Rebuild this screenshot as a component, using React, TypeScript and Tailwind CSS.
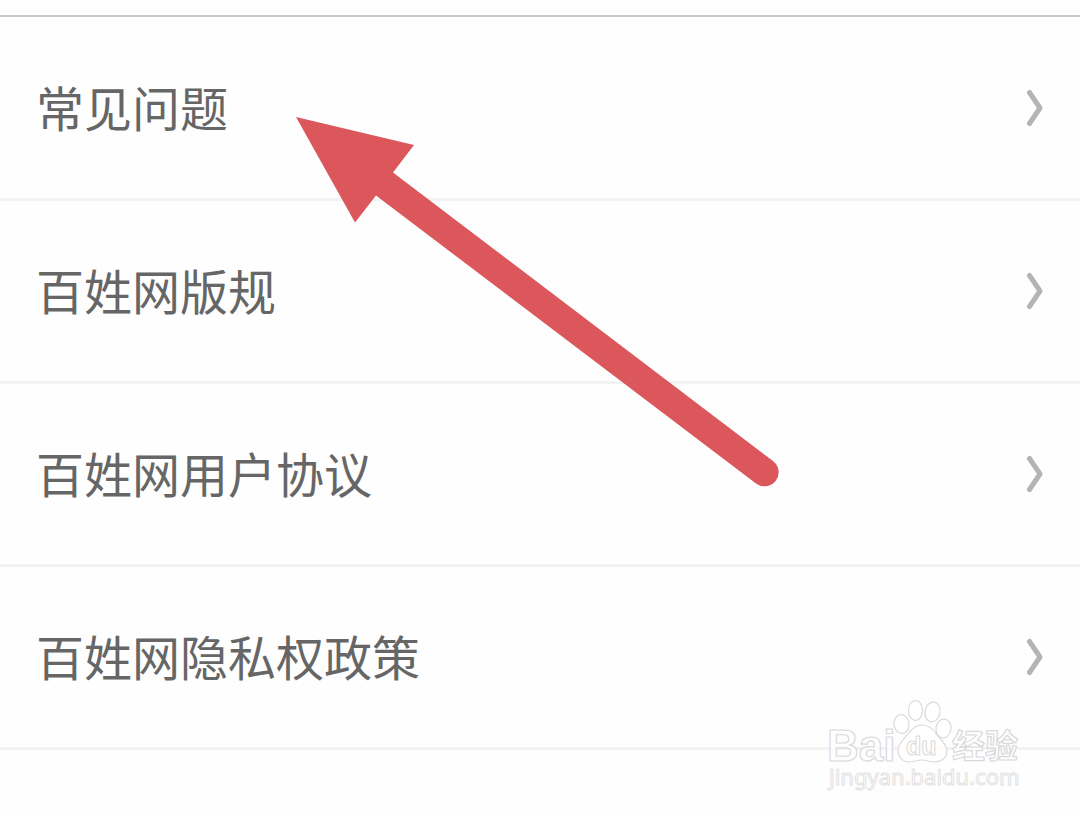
interface HelpLink {
  label: string
  href: string
}

const links: HelpLink[] = [
  { label: '常见问题', href: '#faq' },
  { label: '百姓网版规', href: '#rules' },
  { label: '百姓网用户协议', href: '#agreement' },
  { label: '百姓网隐私权政策', href: '#privacy' },
]

function Chevron() {
  return (
    <svg className="h-10 w-5 shrink-0" viewBox="0 0 20 40" fill="none" aria-hidden="true">
      <path
        d="M4.500 4.500 L15 20 L4.500 35.500"
        stroke="#b4b4b4"
        strokeWidth="5"
        strokeLinecap="round"
        strokeLinejoin="round"
      />
    </svg>
  )
}

function LinkRow({ label, href }: HelpLink) {
  return (
    <li className="border-b-3 border-[#f2f2f2]">
      <a href={href} className="flex h-[180px] items-center justify-between pr-[35px] pl-9">
        <span className="pb-1 text-5xl text-[#666666]">{label}</span>
        <Chevron />
      </a>
    </li>
  )
}

function Arrow() {
  return (
    <svg
      className="pointer-events-none absolute top-[110px] left-[290px] h-[380px] w-[500px]"
      viewBox="290 110 500 380"
      aria-hidden="true"
    >
      <path
        d="M296 117 L414 145 L393 172.500 L773 461 A14 14 0 0 1 756 483.500 L376 195.500 L355 222.500 Z"
        fill="#db575c"
      />
    </svg>
  )
}

function Watermark() {
  return (
    <svg
      className="pointer-events-none absolute right-[50px] bottom-[16px] h-[110px] w-[210px]"
      viewBox="820 690 210 110"
      role="img"
      aria-label="Baidu"
    >
      <g fill="#ffffff" fillOpacity="0.8" stroke="#dadada" strokeWidth="1.2" strokeLinejoin="round">
        <text x="827" y="761" fontFamily="'Liberation Sans', Arial, sans-serif" fontWeight="700" fontSize="44">
          Bai
        </text>
        <ellipse cx="901.500" cy="724" rx="7.500" ry="9.500" transform="rotate(-8 901.500 724)" />
        <ellipse cx="915.500" cy="710.500" rx="7" ry="10" />
        <ellipse cx="932.500" cy="712" rx="7.500" ry="10" transform="rotate(10 932.500 712)" />
        <ellipse cx="943.500" cy="728.500" rx="7.500" ry="9.500" transform="rotate(8 943.500 728.500)" />
        <path d="M922 725 C930 725 934 730 937 735 C940 739 947 744 947 751 C947 759 940 762 934 762 C929 762 927 760 922 760 C917 760 914 762 909 762 C903 762 898 757 898 750 C898 744 904 739 908 734 C911 730 915 725 922 725 Z" />
        <text x="906" y="755" fontFamily="'Liberation Sans', Arial, sans-serif" fontWeight="700" fontSize="25" strokeWidth="1">
          du
        </text>
        <text x="952" y="758" fontFamily="'Noto Sans CJK SC', sans-serif" fontWeight="700" fontSize="33">
          经验
        </text>
        <text x="829" y="785" fontFamily="'Noto Sans', sans-serif" fontSize="22" stroke="#e2e2e2" strokeWidth="1">
          jingyan.baidu.com
        </text>
      </g>
    </svg>
  )
}

export default function App() {
  return (
    <main className="relative min-h-screen bg-[#fefefe] pt-[15px] font-['Noto_Sans_CJK_SC',sans-serif]">
      <ul className="border-t-2 border-[#c8c8c8] pt-px">
        {links.map((link) => (
          <LinkRow key={link.href} {...link} />
        ))}
      </ul>
      <Arrow />
      <Watermark />
    </main>
  )
}
